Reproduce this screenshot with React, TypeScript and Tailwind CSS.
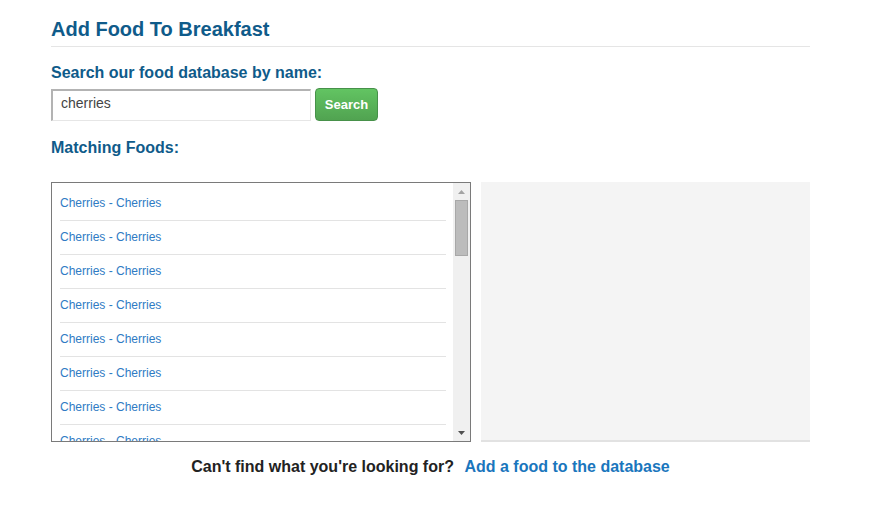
import React from "react";

const items = Array.from({ length: 8 }, () => "Cherries - Cherries");

export default function App() {
  return (
    <div className="min-h-[512px] w-[883px] bg-white" style={{ fontFamily: '"Liberation Sans", Arial, sans-serif' }}>
      <div className="ml-[51px] w-[759px] pt-[17px]">
        <h1 className="text-[20px] leading-[24px] font-bold text-[#0f5b8a] pb-[5px] border-b border-[#e5e5e5]">
          Add Food To Breakfast
        </h1>
        <div className="mt-[17px] text-[16px] leading-[18px] font-bold text-[#0f5b8a]">
          Search our food database by name:
        </div>
        <div className="mt-[7px] flex items-start gap-[4px]">
          <div className="w-[260px] h-[32px] border border-t-[#b3b3b3] border-l-[#b3b3b3] border-r-[#e6e6e6] border-b-[#e6e6e6] border-t-2 border-l-2 pl-[8px] text-[14px] leading-[24px] text-[#444]">
            cherries
          </div>
          <button className="mt-[-1px] w-[63px] h-[33px] rounded-[4px] border border-[#47914a] bg-gradient-to-b from-[#62c462] to-[#51a351] text-white text-[13px] font-bold leading-[30px]">
            Search
          </button>
        </div>
        <div className="mt-[18px] text-[16px] leading-[18px] font-bold text-[#0f5b8a]">Matching Foods:</div>
        <div className="mt-[25px] flex gap-[10px]">
          <div className="w-[420px] h-[260px] border border-[#7a7a7a] flex">
            <div className="flex-1 overflow-hidden pl-[8px] pr-[7px] pt-[4px]">
              {items.map((t, i) => (
                <div key={i} className="h-[34px] border-b border-[#e3e3e3] pt-[9px] text-[12px] leading-[15px] text-[#2f7bc4]">
                  {t}
                </div>
              ))}
            </div>
            <div className="w-[17px] bg-[#f0f0f0] flex flex-col items-center">
              <div className="h-[17px] flex items-center justify-center">
                <svg width="7" height="4" viewBox="0 0 7 4"><path d="M0 4 L3.5 0 L7 4 Z" fill="#a3a3a3" /></svg>
              </div>
              <div className="w-[13px] h-[56px] bg-[#bcbcbc] border border-[#a8a8a8]" />
              <div className="flex-1" />
              <div className="h-[17px] flex items-center justify-center">
                <svg width="7" height="4" viewBox="0 0 7 4"><path d="M0 0 L3.5 4 L7 0 Z" fill="#505050" /></svg>
              </div>
            </div>
          </div>
          <div className="w-[329px] h-[260px] bg-[#f4f4f4] border-b-2 border-[#e2e2e2]" />
        </div>
        <div className="mt-[15px] text-center text-[16px] leading-[20px] font-bold text-[#222]">
          Can't find what you're looking for?{"  "}
          <a className="ml-[6px] text-[#1a76bd]">Add a food to the database</a>
        </div>
      </div>
    </div>
  );
}
